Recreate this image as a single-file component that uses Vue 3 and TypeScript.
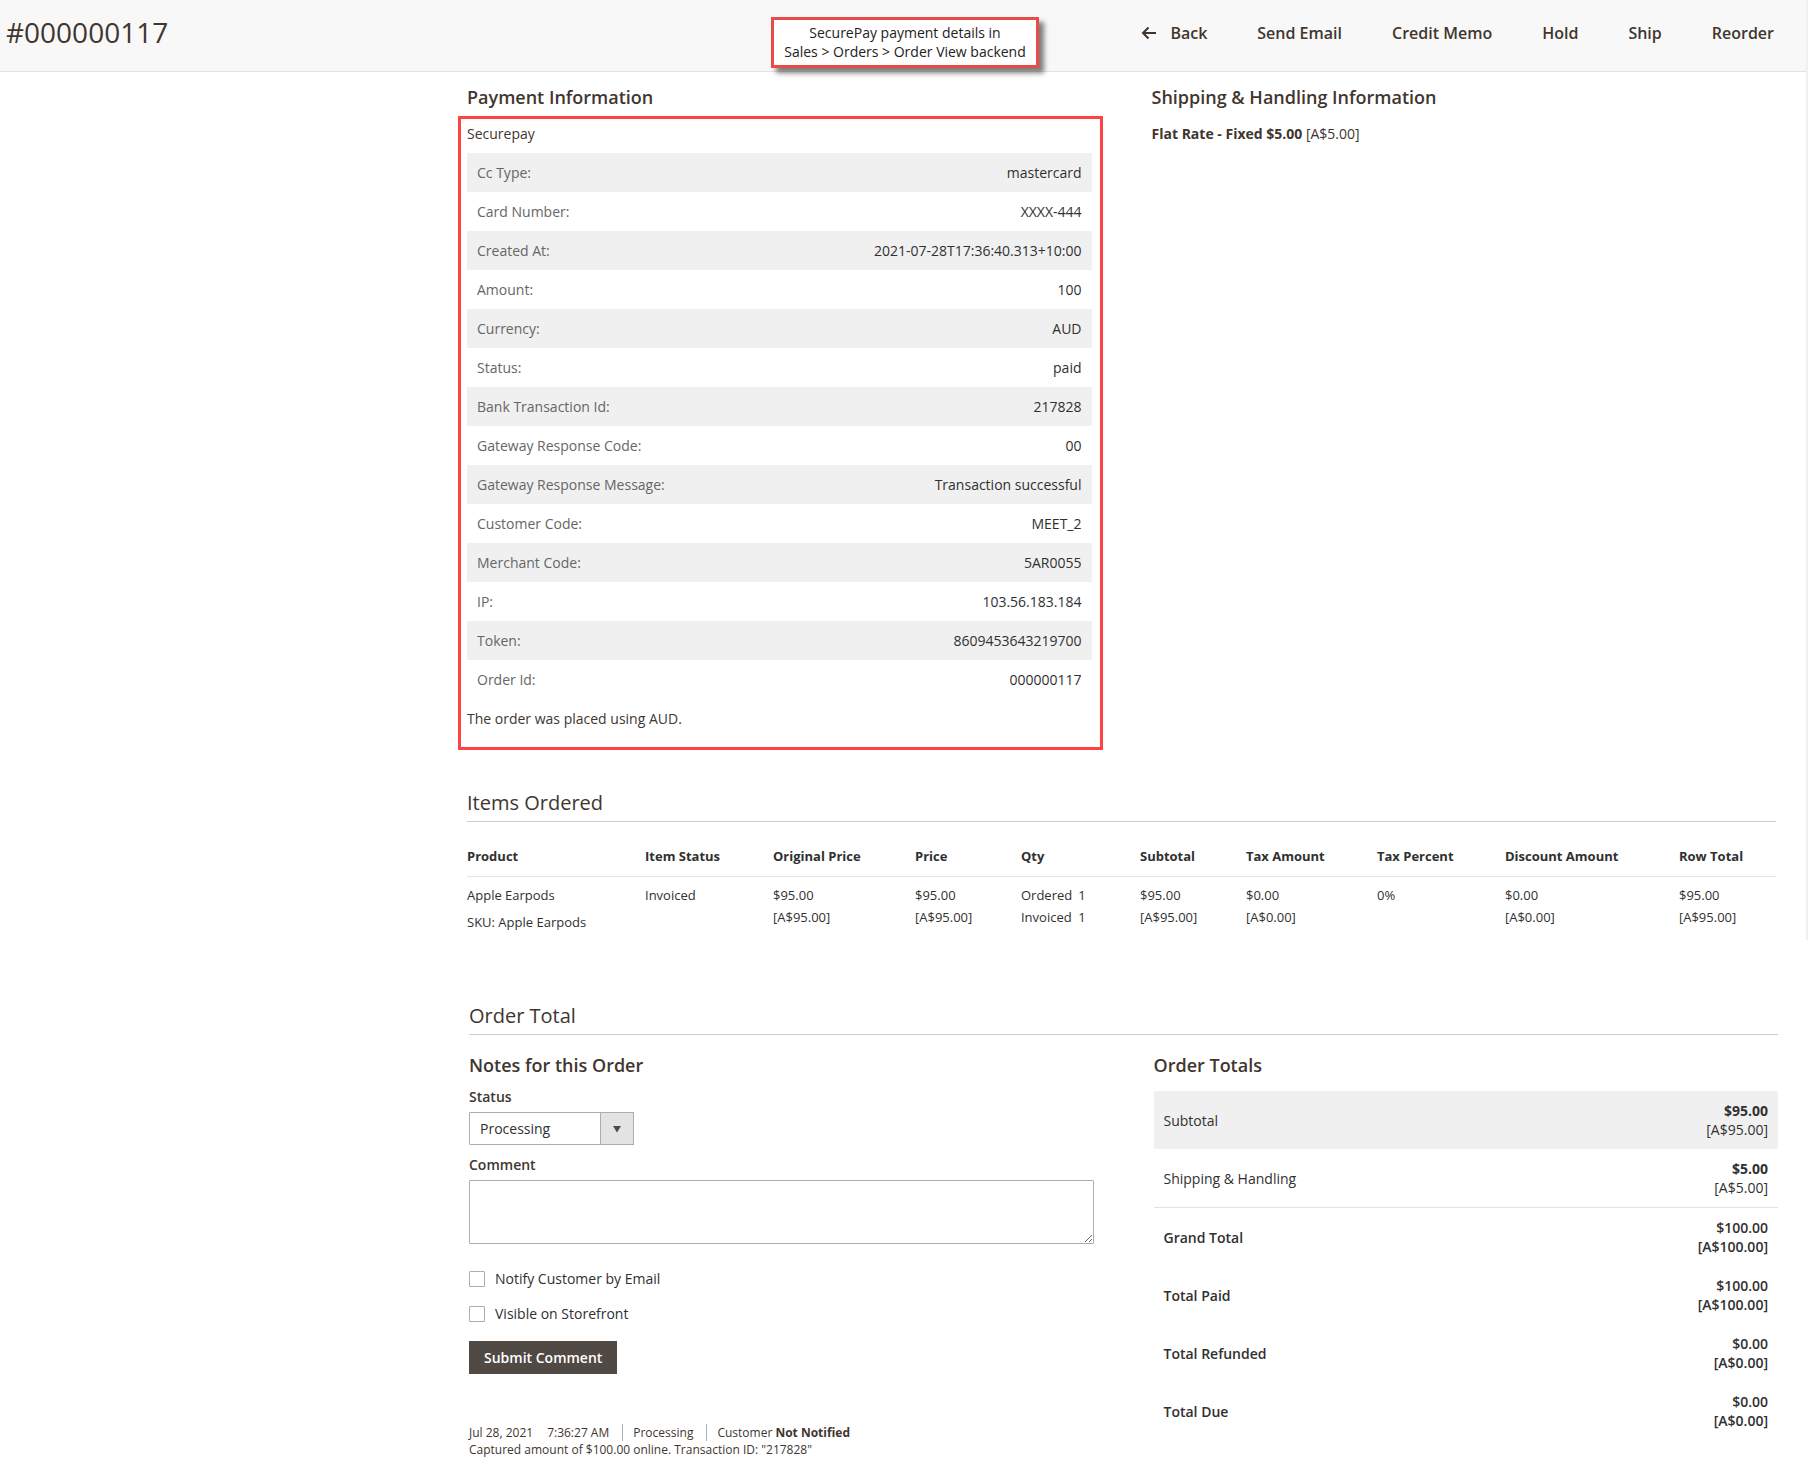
<script setup lang="ts">
import { ref } from 'vue'

interface Row { label: string; value: string }
interface Total { label: string; base: string; order: string; strong?: boolean }
interface Column { title: string; lines: string[]; share: number }

const actions: string[] = ['Send Email', 'Credit Memo', 'Hold', 'Ship', 'Reorder']

const payment: Row[] = [
  { label: 'Cc Type:', value: 'mastercard' },
  { label: 'Card Number:', value: 'XXXX-444' },
  { label: 'Created At:', value: '2021-07-28T17:36:40.313+10:00' },
  { label: 'Amount:', value: '100' },
  { label: 'Currency:', value: 'AUD' },
  { label: 'Status:', value: 'paid' },
  { label: 'Bank Transaction Id:', value: '217828' },
  { label: 'Gateway Response Code:', value: '00' },
  { label: 'Gateway Response Message:', value: 'Transaction successful' },
  { label: 'Customer Code:', value: 'MEET_2' },
  { label: 'Merchant Code:', value: '5AR0055' },
  { label: 'IP:', value: '103.56.183.184' },
  { label: 'Token:', value: '8609453643219700' },
  { label: 'Order Id:', value: '000000117' },
]

const columns: Column[] = [
  { title: 'Product', lines: ['Apple Earpods', 'SKU: Apple Earpods'], share: 178 },
  { title: 'Item Status', lines: ['Invoiced'], share: 128 },
  { title: 'Original Price', lines: ['$95.00', '[A$95.00]'], share: 142 },
  { title: 'Price', lines: ['$95.00', '[A$95.00]'], share: 106 },
  { title: 'Qty', lines: ['Ordered', '1', 'Invoiced', '1'], share: 119 },
  { title: 'Subtotal', lines: ['$95.00', '[A$95.00]'], share: 106 },
  { title: 'Tax Amount', lines: ['$0.00', '[A$0.00]'], share: 131 },
  { title: 'Tax Percent', lines: ['0%'], share: 128 },
  { title: 'Discount Amount', lines: ['$0.00', '[A$0.00]'], share: 174 },
  { title: 'Row Total', lines: ['$95.00', '[A$95.00]'], share: 97 },
]
const shareSum = columns.reduce((sum, c) => sum + c.share, 0)

const totals: Total[] = [
  { label: 'Subtotal', base: '$95.00', order: '[A$95.00]' },
  { label: 'Shipping & Handling', base: '$5.00', order: '[A$5.00]' },
  { label: 'Grand Total', base: '$100.00', order: '[A$100.00]', strong: true },
  { label: 'Total Paid', base: '$100.00', order: '[A$100.00]', strong: true },
  { label: 'Total Refunded', base: '$0.00', order: '[A$0.00]', strong: true },
  { label: 'Total Due', base: '$0.00', order: '[A$0.00]', strong: true },
]

const status = ref('Processing')
const comment = ref('')
const notify = ref(false)
const visible = ref(false)
</script>

<template>
  <main class="page">
    <div class="upper">
      <header class="bar">
        <h1>#000000117</h1>
        <nav class="actions">
          <button type="button" class="action back">
            <svg width="16" height="14" viewBox="0 0 16 14" aria-hidden="true">
              <path d="M15 7H2.5M7.5 1.5L2 7l5.5 5.500" fill="none" stroke="currentColor" stroke-width="2" />
            </svg>
            Back
          </button>
          <button v-for="a in actions" :key="a" type="button" class="action">{{ a }}</button>
        </nav>
        <p class="callout">SecurePay payment details in<br />Sales &gt; Orders &gt; Order View backend</p>
      </header>

      <div class="content">
        <div class="columns">
          <section class="column">
            <h3>Payment Information</h3>
            <div class="framed">
              <p class="method">Securepay</p>
              <table class="payment">
                <tbody>
                  <tr v-for="row in payment" :key="row.label">
                    <th scope="row">{{ row.label }}</th>
                    <td>{{ row.value }}</td>
                  </tr>
                </tbody>
              </table>
              <p class="currency">The order was placed using AUD.</p>
            </div>
          </section>
          <section class="column">
            <h3>Shipping &amp; Handling Information</h3>
            <p class="shipping"><strong>Flat Rate - Fixed $5.00</strong> [A$5.00]</p>
          </section>
        </div>

        <section class="items-section">
          <h2>Items Ordered</h2>
          <table class="items">
            <colgroup>
              <col v-for="c in columns" :key="c.title" :style="{ width: (c.share / shareSum) * 100 + '%' }" />
            </colgroup>
            <thead>
              <tr><th v-for="c in columns" :key="c.title" scope="col">{{ c.title }}</th></tr>
            </thead>
            <tbody>
              <tr>
                <td v-for="c in columns" :key="c.title">
                  <div :class="{ product: c.title === 'Product', qty: c.title === 'Qty' }">
                    <div v-for="(l, i) in c.lines" :key="i">{{ l }}</div>
                  </div>
                </td>
              </tr>
            </tbody>
          </table>
        </section>
      </div>
    </div>

    <section class="total-section">
      <h2>Order Total</h2>
      <div class="columns">
        <form class="column notes" @submit.prevent>
          <h3>Notes for this Order</h3>
          <label class="field-label" for="status">Status</label>
          <div class="select">
            <select id="status" v-model="status"><option>Processing</option></select>
            <span class="select-mark" aria-hidden="true"><svg width="8" height="8" viewBox="0 0 8 8"><path d="M0 1h8L4 7.500z" fill="#514943" /></svg></span>
          </div>
          <label class="field-label" for="comment">Comment</label>
          <textarea id="comment" v-model="comment"></textarea>
          <label class="check"><input v-model="notify" type="checkbox" />Notify Customer by Email</label>
          <label class="check"><input v-model="visible" type="checkbox" />Visible on Storefront</label>
          <button class="submit" type="submit">Submit Comment</button>
          <div class="history">
            <div class="history-meta">
              <span>Jul 28, 2021</span><span class="time">7:36:27 AM</span><span class="cell">Processing</span><span class="cell">Customer <strong>Not Notified</strong></span>
            </div>
            <p>Captured amount of $100.00 online. Transaction ID: "217828"</p>
          </div>
        </form>
        <section class="column">
          <h3>Order Totals</h3>
          <table class="totals">
            <tbody>
              <tr v-for="t in totals" :key="t.label" :class="{ strong: t.strong }">
                <th scope="row">{{ t.label }}</th>
                <td><strong>{{ t.base }}</strong><br />{{ t.order }}</td>
              </tr>
            </tbody>
          </table>
        </section>
      </div>
    </section>
  </main>
</template>

<style>
body {
  margin: 0;
  background: #fff;
}
</style>

<style scoped>
* {
  box-sizing: border-box;
}

.page {
  font: 400 14px/19px 'Open Sans', 'Noto Sans', sans-serif;
  color: #41362f;
}

h1, h2, h3, p {
  margin: 0;
}

strong {
  font-weight: 700;
}

.upper {
  border-right: 2px solid #f0f0f0;
}

.bar {
  position: relative;
  display: flex;
  justify-content: space-between;
  align-items: center;
  height: 72px;
  padding: 0 32px 6px 6px;
  background: #f8f8f8;
  border-bottom: 1px solid #e3e3e3;
}

h1 {
  padding-bottom: 2px;
  font-size: 28px;
  font-weight: 400;
  line-height: 36px;
}

.actions {
  display: flex;
  gap: 50px;
}

.action {
  display: flex;
  align-items: center;
  gap: 13px;
  padding: 0;
  border: 0;
  background: none;
  color: #41362f;
  font: 600 16px/22px 'Open Sans', 'Noto Sans', sans-serif;
}

.callout {
  position: absolute;
  top: 17px;
  left: 50%;
  width: 268px;
  margin-left: -132px;
  padding: 3px 0 4px;
  border: 3px solid #e84c48;
  background: #fff;
  box-shadow: 5px 5px 5px rgba(0, 0, 0, 0.5);
  color: #222;
  text-align: center;
}

.content {
  padding: 13px 30px 7px 467px;
}

.columns {
  display: flex;
  gap: 60px;
}

.column {
  flex: 1 1 0;
  min-width: 0;
}

h3 {
  font-size: 18px;
  font-weight: 600;
  line-height: 24px;
}

.framed {
  margin: 7px -11px 0 -9px;
  padding: 5px 8px 9px 6px;
  border: 3px solid #ff4343;
}

.method {
  padding-bottom: 10px;
}

.currency {
  padding: 10px 0;
}

.shipping {
  margin-top: 15px;
}

table {
  width: 100%;
  border-collapse: collapse;
}

.payment th,
.payment td {
  padding: 10px;
  font-weight: 400;
}

.payment th {
  color: #666;
  text-align: left;
}

.payment td {
  color: #303030;
  text-align: right;
}

.payment tr:nth-child(odd) {
  background: #f0f0f0;
}

h2 {
  padding-bottom: 4px;
  border-bottom: 1px solid #ccc;
  font-size: 20px;
  font-weight: 400;
  line-height: 28px;
}

.items-section {
  margin-top: 39px;
}

.items {
  table-layout: fixed;
  margin-top: 15px;
  color: #303030;
  font-size: 13px;
}

.items th {
  padding: 10px 0 11px;
  border-bottom: 1px solid #e3e3e3;
  font-weight: 700;
  line-height: 18px;
  text-align: left;
}

.items td {
  padding: 7px 0 0;
  line-height: 22px;
  vertical-align: top;
}

.product {
  display: grid;
  gap: 5px;
}

.qty {
  display: grid;
  grid-template-columns: auto 1fr;
  column-gap: 6px;
}

.total-section {
  padding: 62px 30px 10px 469px;
}

.total-section h3 {
  margin-top: 18px;
}

.notes {
  display: flex;
  flex-direction: column;
  align-items: flex-start;
}

.field-label {
  margin: 10px 0 6px;
  font-weight: 600;
}

.select {
  display: flex;
  position: relative;
  width: 165px;
  height: 33px;
}

select {
  width: 100%;
  padding: 0 10px;
  appearance: none;
  border: 1px solid #adadad;
  border-radius: 1px;
  background: #fff;
  color: #303030;
  font: inherit;
}

.select-mark {
  position: absolute;
  top: 0;
  right: 0;
  bottom: 0;
  display: flex;
  width: 34px;
  align-items: center;
  justify-content: center;
  border: 1px solid #adadad;
  background: #e3e3e3;
  pointer-events: none;
}

textarea {
  width: 100%;
  height: 64px;
  margin-bottom: 17px;
  padding: 8px 10px;
  border: 1px solid #adadad;
  border-radius: 1px;
  font: inherit;
}

.check {
  display: flex;
  align-items: center;
  gap: 10px;
  height: 35px;
  color: #303030;
}

.check input {
  width: 16px;
  height: 16px;
  margin: 0;
  appearance: none;
  border: 1px solid #adadad;
  border-radius: 1px;
  background: #fff;
}

.check input:checked {
  background: #514943;
}

.submit {
  height: 33px;
  margin-top: 10px;
  padding: 0 15px;
  border: 0;
  background: #514943;
  color: #fff;
  font: 600 14px/19px 'Open Sans', 'Noto Sans', sans-serif;
}

.history {
  margin-top: 50px;
  font-size: 12px;
  line-height: 17px;
}

.history-meta {
  display: flex;
}

.time {
  margin-left: 14px;
}

.cell {
  margin-left: 13px;
  padding-left: 10px;
  border-left: 1px solid #adadad;
}

.totals {
  margin-top: 14px;
  color: #303030;
}

.totals th,
.totals td {
  padding: 10px;
  font-weight: 400;
}

.totals th {
  text-align: left;
}

.totals td {
  text-align: right;
}

.totals tr:first-child {
  background: #f0f0f0;
}

.totals tr:nth-child(2) {
  border-bottom: 1px solid #e3e3e3;
}

.totals .strong th,
.totals .strong td,
.totals .strong strong {
  font-weight: 600;
}
</style>
